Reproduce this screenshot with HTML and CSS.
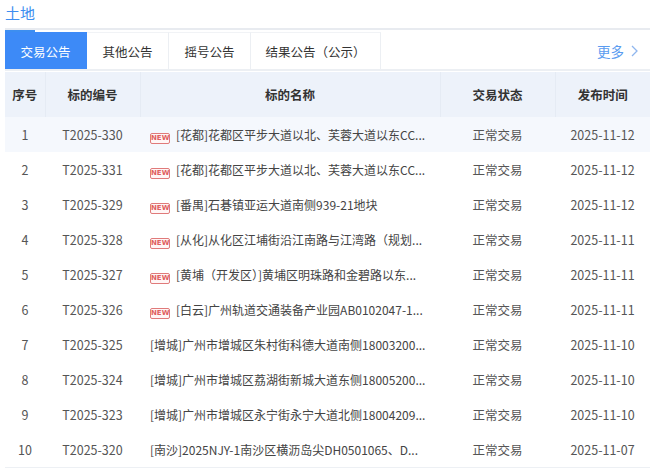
FILE: index.html
```html
<!DOCTYPE html>
<html lang="zh-CN">

<head>
  <meta charset="UTF-8">
  <meta name="viewport" content="width=device-width, initial-scale=1.0">
  <title>土地 - 交易公告</title>
  <link rel="stylesheet" href="styles.css">
</head>

<body>
  <div class="panel">
    <div class="title-bar">
      <h2 class="title">土地</h2>
    </div>

    <div class="tabs">
      <a class="tab active">交易公告</a>
      <a class="tab">其他公告</a>
      <a class="tab">摇号公告</a>
      <a class="tab">结果公告（公示）</a>
      <a class="more">更多
        <svg width="10" height="14" viewBox="0 0 10 14"><path d="M2 2 L7 7 L2 12" fill="none" stroke="#8fb6ee" stroke-width="1.3"/></svg>
      </a>
    </div>

    <table class="list">
      <colgroup>
        <col class="c-no">
        <col class="c-code">
        <col class="c-name">
        <col class="c-status">
        <col class="c-date">
      </colgroup>
      <thead>
        <tr>
          <th>序号</th>
          <th>标的编号</th>
          <th>标的名称</th>
          <th>交易状态</th>
          <th>发布时间</th>
        </tr>
      </thead>
      <tbody>
        <tr class="hover">
          <td>1</td>
          <td>T2025-330</td>
          <td class="name"><span class="new">NEW</span>[花都]花都区平步大道以北、芙蓉大道以东CC...</td>
          <td>正常交易</td>
          <td>2025-11-12</td>
        </tr>
        <tr>
          <td>2</td>
          <td>T2025-331</td>
          <td class="name"><span class="new">NEW</span>[花都]花都区平步大道以北、芙蓉大道以东CC...</td>
          <td>正常交易</td>
          <td>2025-11-12</td>
        </tr>
        <tr>
          <td>3</td>
          <td>T2025-329</td>
          <td class="name"><span class="new">NEW</span>[番禺]石碁镇亚运大道南侧939-21地块</td>
          <td>正常交易</td>
          <td>2025-11-12</td>
        </tr>
        <tr>
          <td>4</td>
          <td>T2025-328</td>
          <td class="name"><span class="new">NEW</span>[从化]从化区江埔街沿江南路与江湾路（规划...</td>
          <td>正常交易</td>
          <td>2025-11-11</td>
        </tr>
        <tr>
          <td>5</td>
          <td>T2025-327</td>
          <td class="name"><span class="new">NEW</span>[黄埔（开发区）]黄埔区明珠路和金碧路以东...</td>
          <td>正常交易</td>
          <td>2025-11-11</td>
        </tr>
        <tr>
          <td>6</td>
          <td>T2025-326</td>
          <td class="name"><span class="new">NEW</span>[白云]广州轨道交通装备产业园AB0102047-1...</td>
          <td>正常交易</td>
          <td>2025-11-11</td>
        </tr>
        <tr>
          <td>7</td>
          <td>T2025-325</td>
          <td class="name">[增城]广州市增城区朱村街科德大道南侧18003200...</td>
          <td>正常交易</td>
          <td>2025-11-10</td>
        </tr>
        <tr>
          <td>8</td>
          <td>T2025-324</td>
          <td class="name">[增城]广州市增城区荔湖街新城大道东侧18005200...</td>
          <td>正常交易</td>
          <td>2025-11-10</td>
        </tr>
        <tr>
          <td>9</td>
          <td>T2025-323</td>
          <td class="name">[增城]广州市增城区永宁街永宁大道北侧18004209...</td>
          <td>正常交易</td>
          <td>2025-11-10</td>
        </tr>
        <tr>
          <td>10</td>
          <td>T2025-320</td>
          <td class="name">[南沙]2025NJY-1南沙区横沥岛尖DH0501065、D...</td>
          <td>正常交易</td>
          <td>2025-11-07</td>
        </tr>
      </tbody>
    </table>
  </div>
</body>

</html>
```

FILE: styles.css
```css
body {
  margin: 0;
  font-family: "Noto Sans CJK SC", "Noto Sans", sans-serif;
  background: #fff;
  color: #555;
}

.panel {
  width: 645px;
  padding-left: 5px;
}

.title-bar {
  border-bottom: 2px solid #e8ebf0;
  height: 28px;
}

.title {
  display: inline-block;
  margin: 0;
  height: 30px;
  font-size: 15px;
  font-weight: normal;
  line-height: 21px;
  color: #3d8ef0;
  border-bottom: 2px solid #3d8ef0;
  box-sizing: border-box;
}

.tabs {
  display: flex;
  align-items: stretch;
  height: 37px;
  margin-top: 2px;
  border-bottom: 2px solid #eceff3;
}

.tab {
  display: flex;
  align-items: center;
  justify-content: center;
  width: 82px;
  font-size: 12.5px;
  color: #333;
  border-right: 1px solid #eceff3;
  border-top: 1px solid #f1f3f6;
  box-sizing: border-box;
}

.tab:nth-child(4) {
  width: 130px;
}

.tab.active {
  background: #3d8af7;
  color: #fff;
  border-color: #3d8af7;
}

.more {
  margin-left: auto;
  margin-right: 10px;
  display: flex;
  align-items: center;
  gap: 6px;
  font-size: 13.5px;
  color: #5a9cf0;
}

.list {
  width: 645px;
  margin-top: 1px;
  border-collapse: collapse;
  table-layout: fixed;
  font-size: 12.5px;
}

.c-no { width: 40px; }
.c-code { width: 95px; }
.c-name { width: 300px; }
.c-status { width: 115px; }
.c-date { width: 95px; }

th {
  height: 45px;
  padding: 0;
  background: #edf2fa;
  color: #333;
  font-size: 12.5px;
  font-weight: bold;
  border-right: 1px solid #e5ebf4;
}

th:last-child {
  border-right: none;
}

td {
  height: 35px;
  padding: 0;
  text-align: center;
  white-space: nowrap;
  color: #555;
}

tbody tr:last-child td {
  border-bottom: 1px solid #edf0f4;
}

tr.hover td {
  background: #f5f8fd;
}

td.name {
  text-align: left;
  padding-left: 10px;
  font-size: 12px;
  color: #444;
}

.new {
  display: inline-block;
  width: 20px;
  height: 11px;
  margin-right: 6px;
  border: 1px solid #e07a7a;
  border-radius: 2px;
  background: #fff6f6;
  color: #e06060;
  font-family: "DejaVu Sans", sans-serif;
  font-size: 7px;
  font-weight: bold;
  line-height: 9px;
  text-align: center;
  vertical-align: 0;
  box-sizing: border-box;
}
```
